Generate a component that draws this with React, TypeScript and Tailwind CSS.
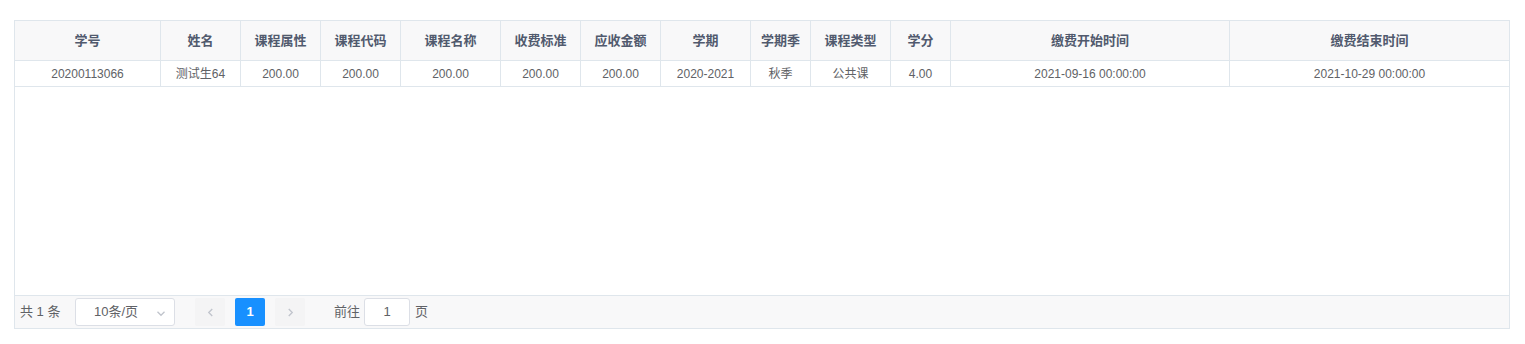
import React from "react";

const cols = [
  { h: "学号", v: "20200113066", w: "w-[146px]" },
  { h: "姓名", v: "测试生64", w: "w-[80px]" },
  { h: "课程属性", v: "200.00", w: "w-[80px]" },
  { h: "课程代码", v: "200.00", w: "w-[80px]" },
  { h: "课程名称", v: "200.00", w: "w-[100px]" },
  { h: "收费标准", v: "200.00", w: "w-[80px]" },
  { h: "应收金额", v: "200.00", w: "w-[80px]" },
  { h: "学期", v: "2020-2021", w: "w-[90px]" },
  { h: "学期季", v: "秋季", w: "w-[60px]" },
  { h: "课程类型", v: "公共课", w: "w-[80px]" },
  { h: "学分", v: "4.00", w: "w-[60px]" },
  { h: "缴费开始时间", v: "2021-09-16 00:00:00", w: "w-[279px]" },
  { h: "缴费结束时间", v: "2021-10-29 00:00:00", w: "w-[279px]" },
];

const font = {
  fontFamily: '"Liberation Sans", Arial, "Noto Sans CJK SC", sans-serif',
};

function Chevron({ dir, className }: { dir: "left" | "right" | "down"; className?: string }) {
  const d =
    dir === "left" ? "M6 1 L2 5 L6 9" : dir === "right" ? "M2 1 L6 5 L2 9" : "M1 2 L5 6 L9 2";
  const vb = dir === "down" ? "0 0 10 8" : "0 0 8 10";
  return (
    <svg viewBox={vb} className={className} fill="none" stroke="currentColor" strokeWidth="1.5">
      <path d={d} />
    </svg>
  );
}

export default function App() {
  return (
    <div className="w-[1525px] h-[344px] bg-white pt-[20px] pl-[14px]" style={font}>
      <div className="w-[1496px] border border-[#dfe6ec]">
        {/* header */}
        <div className="flex h-[40px] bg-[#f8f8f9] border-b border-[#dfe6ec]">
          {cols.map((c, i) => (
            <div
              key={i}
              className={`${c.w} flex items-center justify-center text-[13px] font-bold text-[#515a6e] ${
                i < cols.length - 1 ? "border-r border-[#dfe6ec]" : ""
              }`}
            >
              {c.h}
            </div>
          ))}
        </div>
        {/* row */}
        <div className="flex h-[26px] border-b border-[#dfe6ec]">
          {cols.map((c, i) => (
            <div
              key={i}
              className={`${c.w} flex items-center justify-center text-[12px] text-[#606266] ${
                i < cols.length - 1 ? "border-r border-[#dfe6ec]" : ""
              }`}
            >
              {c.v}
            </div>
          ))}
        </div>
        {/* empty */}
        <div className="h-[209px] border-b border-[#dfe6ec]" />
        {/* footer */}
        <div className="h-[32px] bg-[#f8f8f9] flex items-center pl-[5px] text-[13px] text-[#606266]">
          <span className="w-[55px]">共 1 条</span>
          <div className="w-[100px] h-[28px] border border-[#dcdfe6] rounded-[3px] bg-white flex items-center relative">
            <span className="pl-[18px] text-[13px] text-[#606266]">10条/页</span>
            <Chevron dir="down" className="absolute right-[8px] top-[11px] w-[10px] h-[7px] text-[#c0c4cc]" />
          </div>
          <div className="ml-[20px] w-[30px] h-[28px] bg-[#f4f4f5] rounded-[2px] flex items-center justify-center">
            <Chevron dir="left" className="w-[7px] h-[11px] text-[#c0c4cc]" />
          </div>
          <div className="ml-[10px] w-[30px] h-[28px] bg-[#1890ff] rounded-[2px] flex items-center justify-center text-white font-bold text-[13px]">
            1
          </div>
          <div className="ml-[10px] w-[30px] h-[28px] bg-[#f4f4f5] rounded-[2px] flex items-center justify-center">
            <Chevron dir="right" className="w-[7px] h-[11px] text-[#c0c4cc]" />
          </div>
          <span className="ml-[29px]">前往</span>
          <div className="ml-[4px] w-[46px] h-[28px] border border-[#dcdfe6] rounded-[3px] bg-white flex items-center justify-center text-[13px]">
            1
          </div>
          <span className="ml-[5px]">页</span>
        </div>
      </div>
    </div>
  );
}
